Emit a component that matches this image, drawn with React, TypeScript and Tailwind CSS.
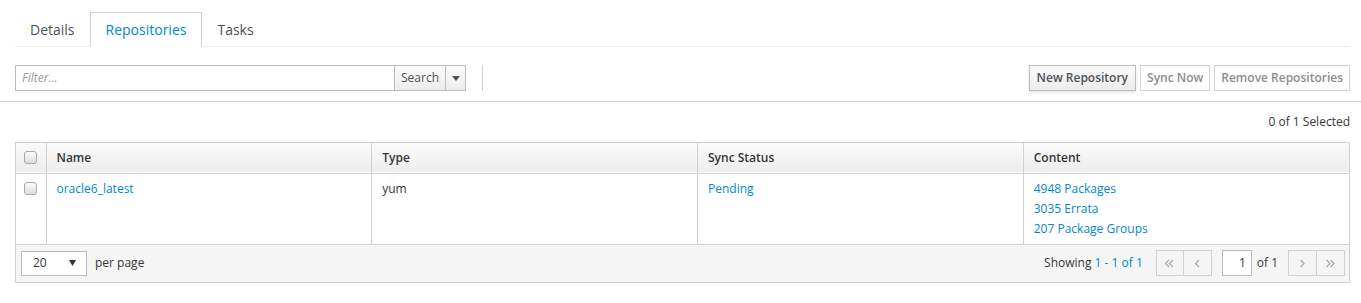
import React from 'react';

const font = { fontFamily: '"Open Sans", "Noto Sans", sans-serif' };

const Checkbox: React.FC = () => (
  <span className="inline-block h-[13px] w-[13px] rounded-[3px] border border-[#a9a9a9] bg-gradient-to-b from-[#fdfdfd] to-[#dcdcdc]" />
);

const Caret: React.FC = () => (
  <svg width="8" height="5" viewBox="0 0 8 5">
    <path d="M0 0h8L4 5z" fill="#4d5258" />
  </svg>
);

// thin chevrons used by the pager buttons
const Chevron: React.FC<{ dir: 'left' | 'right'; double?: boolean }> = ({ dir, double }) => {
  const one = dir === 'left' ? 'M5 1L1.5 4.5L5 8' : 'M1.5 1L5 4.5L1.5 8';
  const two = dir === 'left' ? 'M9 1L5.5 4.5L9 8' : 'M5.5 1L9 4.5L5.5 8';
  return (
    <svg width={double ? 11 : 7} height="9" viewBox={double ? '0 0 11 9' : '0 0 7 9'}>
      <path d={one} fill="none" stroke="#a8a8a8" strokeWidth="1.2" />
      {double && <path d={two} fill="none" stroke="#a8a8a8" strokeWidth="1.2" />}
    </svg>
  );
};

const pagerBtn = 'h-[26px] border border-[#d1d1d1] bg-[#f5f5f5] flex items-center justify-center';

const App: React.FC = () => {
  return (
    <div className="w-[1361px] h-[303px] bg-white text-[12px] text-[#363636]" style={font}>
      {/* Tabs */}
      <div className="ml-[15px] mr-[11px] pt-[12px] flex border-b border-[#ededed] text-[14px]">
        <div className="h-[34px] px-[15px] flex items-center text-[#4d5258]">Details</div>
        <div className="h-[35px] -mb-px px-[15px] flex items-center text-[#0088ce] bg-white border border-[#d1d1d1] border-b-white">
          Repositories
        </div>
        <div className="h-[34px] px-[15px] flex items-center text-[#4d5258]">Tasks</div>
      </div>

      {/* Toolbar */}
      <div className="pt-[18px] pb-[10px] pl-[15px] pr-[11px] flex items-center border-b border-[#d1d1d1]">
        <div className="flex h-[26px]">
          <div className="w-[380px] h-[26px] border border-[#bbbbbb] flex items-center px-[6px] italic text-[#999999]">
            Filter...
          </div>
          <div className="w-[52px] h-[26px] -ml-px border border-[#bbbbbb] bg-gradient-to-b from-[#fafafa] to-[#ededed] flex items-center justify-center text-[#4d5258]">
            Search
          </div>
          <div className="w-[21px] h-[26px] -ml-px border border-[#bbbbbb] bg-gradient-to-b from-[#fafafa] to-[#ededed] flex items-center justify-center">
            <Caret />
          </div>
        </div>
        <div className="ml-[16px] w-px h-[26px] bg-[#d1d1d1]" />
        <div className="ml-auto flex gap-[4px]">
          <div className="h-[26px] px-[7px] border border-[#bbbbbb] bg-gradient-to-b from-[#fafafa] to-[#ededed] shadow-[0_2px_3px_rgba(3,3,3,0.1)] flex items-center font-semibold text-[#4d5258]">
            New Repository
          </div>
          <div className="h-[26px] px-[6px] border border-[#d1d1d1] bg-white flex items-center font-semibold text-[#8b8d8f]">
            Sync Now
          </div>
          <div className="h-[26px] px-[6px] border border-[#d1d1d1] bg-white flex items-center font-semibold text-[#8b8d8f]">
            Remove Repositories
          </div>
        </div>
      </div>

      <div className="mr-[11px] h-[40px] flex items-center justify-end">0 of 1 Selected</div>

      {/* Table */}
      <div className="ml-[15px] mr-[11px] border border-[#d1d1d1]">
        <table className="w-full border-collapse table-fixed">
          <colgroup>
            <col className="w-[30px]" />
            <col />
            <col />
            <col />
            <col />
          </colgroup>
          <thead>
            <tr className="h-[30px] bg-gradient-to-b from-[#fafafa] to-[#ededed] border-b border-[#d1d1d1]">
              <th className="text-center align-middle border-r border-[#d1d1d1]">
                <div className="flex justify-center"><Checkbox /></div>
              </th>
              <th className="text-left font-semibold px-[10px] border-r border-[#d1d1d1]">Name</th>
              <th className="text-left font-semibold px-[10px] border-r border-[#d1d1d1]">Type</th>
              <th className="text-left font-semibold px-[10px] border-r border-[#d1d1d1]">Sync Status</th>
              <th className="text-left font-semibold px-[10px]">Content</th>
            </tr>
          </thead>
          <tbody>
            <tr className="h-[70px] align-top border-b border-[#d1d1d1]">
              <td className="border-r border-[#d1d1d1] pt-[8px]">
                <div className="flex justify-center"><Checkbox /></div>
              </td>
              <td className="px-[10px] pt-[5px] leading-[20px] text-[#0088ce] border-r border-[#d1d1d1]">oracle6_latest</td>
              <td className="px-[10px] pt-[5px] leading-[20px] border-r border-[#d1d1d1]">yum</td>
              <td className="px-[10px] pt-[5px] leading-[20px] text-[#0088ce] border-r border-[#d1d1d1]">Pending</td>
              <td className="px-[10px] pt-[5px] pb-[5px] leading-[20px] text-[#0088ce]">
                <div>4948 Packages</div>
                <div>3035 Errata</div>
                <div>207 Package Groups</div>
              </td>
            </tr>
          </tbody>
        </table>

        {/* Footer */}
        <div className="h-[37px] bg-[#f5f5f5] flex items-center pl-[5px] pr-[4px]">
          <div className="w-[66px] h-[25px] bg-white border border-[#bbbbbb] flex items-center justify-between pl-[11px] pr-[10px]">
            <span>20</span>
            <svg width="7" height="6" viewBox="0 0 7 6"><path d="M0 0h7L3.5 6z" fill="#363636" /></svg>
          </div>
          <span className="ml-[8px]">per page</span>
          <div className="ml-auto flex items-center">
            <span>
              Showing <span className="text-[#0088ce]">1 - 1 of 1</span>
            </span>
            <div className="ml-[13px] flex">
              <div className={`${pagerBtn} w-[28px]`}><Chevron dir="left" double /></div>
              <div className={`${pagerBtn} w-[29px] -ml-px`}><Chevron dir="left" /></div>
            </div>
            <div className="ml-[10px] w-[30px] h-[26px] bg-white border border-[#bbbbbb] flex items-center justify-end pr-[5px]">1</div>
            <span className="ml-[5px]">of 1</span>
            <div className="ml-[10px] flex">
              <div className={`${pagerBtn} w-[29px]`}><Chevron dir="right" /></div>
              <div className={`${pagerBtn} w-[29px] -ml-px`}><Chevron dir="right" double /></div>
            </div>
          </div>
        </div>
      </div>
    </div>
  );
};

export default App;
